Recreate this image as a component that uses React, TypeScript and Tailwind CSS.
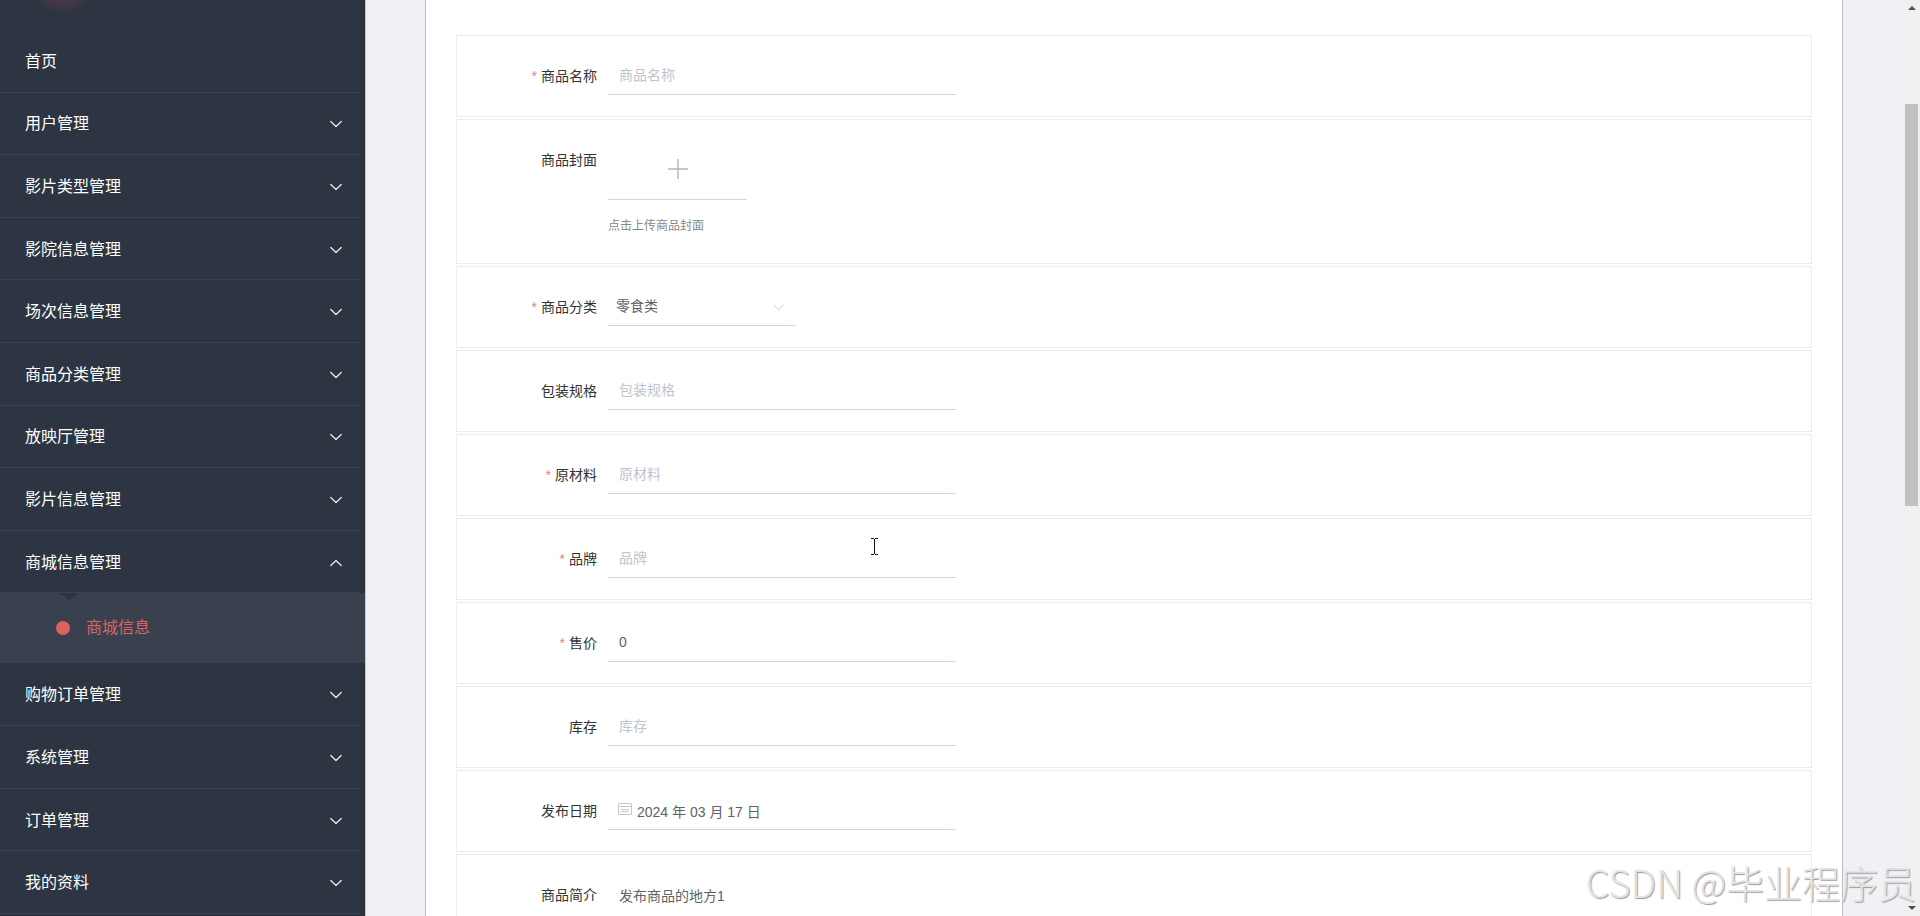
import React from 'react'

type MenuEntry = { label: string; open?: boolean; leaf?: boolean }

const menu: MenuEntry[] = [
  { label: '首页', leaf: true },
  { label: '用户管理' },
  { label: '影片类型管理' },
  { label: '影院信息管理' },
  { label: '场次信息管理' },
  { label: '商品分类管理' },
  { label: '放映厅管理' },
  { label: '影片信息管理' },
  { label: '商城信息管理', open: true },
  { label: '购物订单管理' },
  { label: '系统管理' },
  { label: '订单管理' },
  { label: '我的资料' },
]

const Chevron = ({ up, className = '' }: { up?: boolean; className?: string }) => (
  <svg
    viewBox="0 0 12 8"
    fill="none"
    stroke="currentColor"
    strokeLinecap="round"
    strokeLinejoin="round"
    aria-hidden="true"
    className={className}
  >
    <path d={up ? 'M0.8 6.5 L6 1.5 L11.2 6.5' : 'M0.8 1.5 L6 6.5 L11.2 1.5'} />
  </svg>
)

const Sidebar = () => {
  return (
    <aside className="relative w-[365px] shrink-0 overflow-hidden bg-[#2c3541] pt-[30px] shadow-[inset_-5px_0_0_#2d323c]">
      <div className="absolute -top-9 left-9 h-11 w-13 rounded-full bg-[#453848] blur-[3px]" />
      <nav>
        <ul className="flex h-[884px] flex-col">
          {menu.map((entry) => (
            <React.Fragment key={entry.label}>
              <li className="mr-[5px] flex flex-1 border-b border-[#3a4450]">
                {entry.leaf ? (
                  <a href="#" className="flex flex-1 items-center pl-[25px] pr-[18px] pt-0.5 text-base text-white">
                    {entry.label}
                  </a>
                ) : (
                  <button
                    type="button"
                    aria-expanded={!!entry.open}
                    className="flex flex-1 items-center justify-between pl-[25px] pr-[18px] pt-0.5 text-base text-white"
                  >
                    {entry.label}
                    <Chevron up={entry.open} className="h-2 w-3 stroke-[1.3] text-[#e6eaf0]" />
                  </button>
                )}
              </li>
              {entry.open && (
                <li className="relative h-[70px] shrink-0 bg-[#38414d]">
                  <svg viewBox="0 0 20 7" aria-hidden="true" className="absolute left-[59px] top-0 h-[7px] w-5">
                    <path d="M0 0 L10 7 L20 0 Z" fill="#2c3541" />
                  </svg>
                  <a href="#" className="flex h-full items-center gap-4 pl-14 text-base text-[#dc6264]">
                    <span className="h-3.5 w-3.5 rounded-full bg-[#e0605e]" />
                    商城信息
                  </a>
                </li>
              )}
            </React.Fragment>
          ))}
        </ul>
      </nav>
    </aside>
  )
}

type FieldProps = {
  id: string
  label: string
  required?: boolean
  children: React.ReactNode
}

const Field = ({ id, label, required, children }: FieldProps) => {
  return (
    <div className="mb-0.5 flex border border-[#ececee] py-[19px]">
      <label htmlFor={id} className="w-[151px] shrink-0 pr-[11px] text-right text-sm leading-[42px] text-[#333]">
        {required && <span className="mr-1 text-[#ee8088]">*</span>}
        {label}
      </label>
      {children}
    </div>
  )
}

const inputClass =
  'h-10 w-[348px] border-b border-[#d4d6da] bg-transparent px-[11px] text-sm text-[#606266] outline-none placeholder:text-[#c0c4cc]'

const CalendarIcon = () => (
  <svg
    viewBox="0 0 14 14"
    fill="none"
    stroke="#c4c7cd"
    aria-hidden="true"
    className="pointer-events-none absolute left-2.5 top-3 h-3.5 w-3.5"
  >
    <path d="M0.5 1.5 H13.5 V12.5 H0.5 Z M0.5 4.5 H13.5 M3 7.5 H11 M3 9.5 H11" />
  </svg>
)

const ProductForm = () => {
  return (
    <form className="min-h-full border-x border-[#b9bcc4] bg-white px-[30px] pt-[35px]">
      <Field id="name" label="商品名称" required>
        <input id="name" placeholder="商品名称" className={inputClass} />
      </Field>

      <Field id="cover" label="商品封面">
        <div className="pb-2">
          <button
            id="cover"
            type="button"
            aria-label="商品封面"
            className="flex h-[61px] w-[139px] items-center justify-center border-b border-[#d4d6da]"
          >
            <svg viewBox="0 0 20 20" fill="none" stroke="#b4b6ba" aria-hidden="true" className="h-5 w-5">
              <path d="M10 0 V20 M0 10 H20" strokeWidth="1.4" />
            </svg>
          </button>
          <p className="mt-4 text-xs leading-5 text-[#85888e]">点击上传商品封面</p>
        </div>
      </Field>

      <Field id="category" label="商品分类" required>
        <div className="relative w-[188px]">
          <select
            id="category"
            defaultValue="零食类"
            className="h-10 w-full appearance-none border-b border-[#d4d6da] bg-transparent px-2 text-sm text-[#606266] outline-none"
          >
            <option>零食类</option>
          </select>
          <Chevron className="pointer-events-none absolute right-3 top-[18px] h-[7px] w-[11px] text-[#c0c4cc]" />
        </div>
      </Field>

      <Field id="spec" label="包装规格">
        <input id="spec" placeholder="包装规格" className={inputClass} />
      </Field>

      <Field id="material" label="原材料" required>
        <input id="material" placeholder="原材料" className={inputClass} />
      </Field>

      <Field id="brand" label="品牌" required>
        <input id="brand" placeholder="品牌" className={inputClass} />
      </Field>

      <Field id="price" label="售价" required>
        <input id="price" defaultValue="0" className={inputClass} />
      </Field>

      <Field id="stock" label="库存">
        <input id="stock" placeholder="库存" className={inputClass} />
      </Field>

      <Field id="date" label="发布日期">
        <div className="relative">
          <CalendarIcon />
          <input
            id="date"
            defaultValue="2024 年 03 月 17 日"
            className="h-10 w-[348px] border-b border-[#d4d6da] bg-transparent pl-[29px] pr-2.5 pt-0.5 text-sm text-[#606266] outline-none"
          />
        </div>
      </Field>

      <Field id="intro" label="商品简介">
        <textarea
          id="intro"
          defaultValue="发布商品的地方1"
          className="h-[120px] w-[348px] resize-none bg-transparent px-[11px] pt-3 text-sm text-[#606266] outline-none"
        />
      </Field>
    </form>
  )
}

const Scrollbar = () => {
  return (
    <div aria-hidden="true" className="flex w-4 shrink-0 flex-col bg-[#f0f0f1]">
      <div className="flex h-4 items-center justify-center">
        <svg viewBox="0 0 8 4" className="h-1 w-2">
          <path d="M0 4 L4 0 L8 4 Z" fill="#4d4d4d" />
        </svg>
      </div>
      <div className="ml-px mt-[88px] h-[402px] w-[13px] bg-[#c1c1c1]" />
      <div className="mt-auto flex h-4 items-center justify-center">
        <svg viewBox="0 0 8 4" className="h-1 w-2">
          <path d="M0 0 L4 4 L8 0 Z" fill="#4d4d4d" />
        </svg>
      </div>
    </div>
  )
}

const App = () => {
  return (
    <div className="relative flex h-screen overflow-hidden bg-[#f0f1f5] font-['Liberation_Sans','Noto_Sans_CJK_SC',sans-serif]">
      <Sidebar />
      <main className="min-w-0 flex-1 overflow-hidden border-l border-[#c3c6cb] pl-[59px] pr-[61px]">
        <ProductForm />
      </main>
      <Scrollbar />

      {/* text cursor */}
      <svg
        viewBox="0 0 7 17"
        fill="none"
        stroke="#111"
        aria-hidden="true"
        className="pointer-events-none absolute left-[871px] top-[538px] h-[17px] w-[7px]"
      >
        <path d="M0 0.5 H3 M4 0.5 H7 M3.5 1 V16 M0 16.5 H3 M4 16.5 H7" />
      </svg>

      <p className="pointer-events-none absolute bottom-0 right-1 font-['Noto_Sans_CJK_SC',sans-serif] text-[38px] font-light leading-[68px] text-[#e4e4e6] [text-shadow:1px_1px_1px_#9a9a9e]">
        CSDN @毕业程序员
      </p>
    </div>
  )
}

export default App
